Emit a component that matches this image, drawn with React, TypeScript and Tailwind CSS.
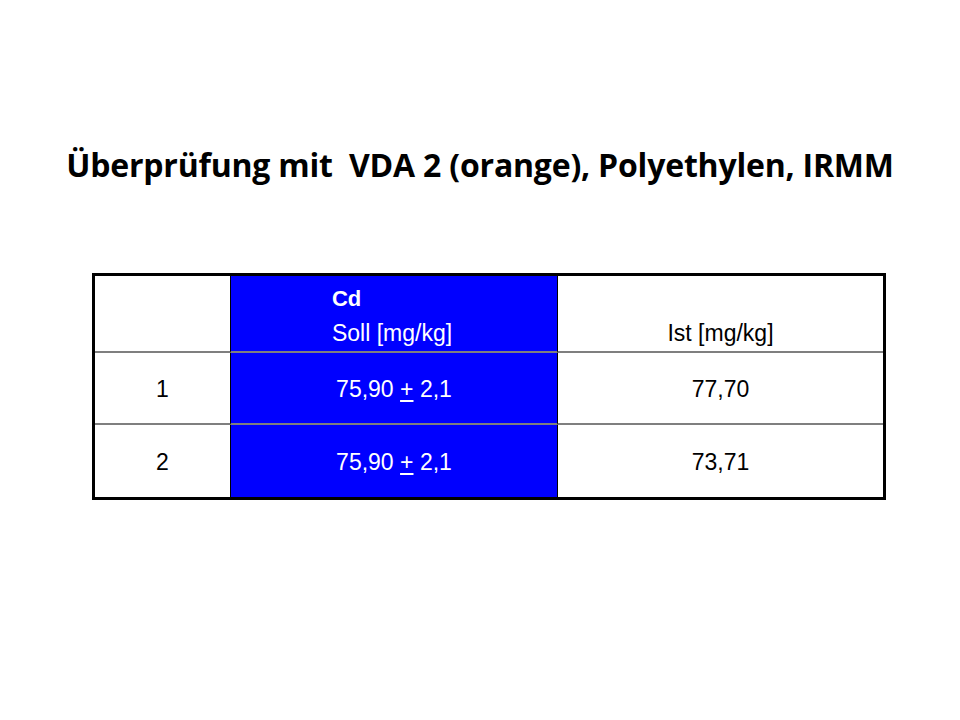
import React from 'react';

// Slide: Überprüfung VDA 2 – Cd Soll/Ist comparison table

const rows = [
  { nr: '1', ist: '77,70' },
  { nr: '2', ist: '73,71' },
];

function Soll() {
  return (
    <span>
      75,90 <span className="underline underline-offset-[3px]">+</span> 2,1
    </span>
  );
}

export default function App() {
  return (
    <div className="w-[960px] h-[720px] bg-white flex flex-col items-center">
      <h1
        className="mt-[140px] text-[32px] leading-[50px] font-bold text-black whitespace-pre tracking-[-0.2px]"
        style={{ fontFamily: '"Open Sans", "Noto Sans", sans-serif' }}
      >
        Überprüfung mit  VDA 2 (orange), Polyethylen, IRMM
      </h1>

      <div
        className="mt-[83px] ml-[18px] w-[794px] border-[3px] border-black grid grid-cols-[135px_327px_1fr] text-[23px] text-black"
        style={{ fontFamily: '"Liberation Sans", Arial, sans-serif' }}
      >
        {/* header */}
        <div className="h-[77px] border-b-2 border-[#7f7f7f]" />
        <div className="h-[77px] bg-[#0000ff] border-l border-b-2 border-l-black border-b-[#7f7f7f] text-white flex justify-center">
          <div className="pt-[6px] leading-[34px] pr-1">
            <div className="font-bold text-[22px]">Cd</div>
            <div>Soll [mg/kg]</div>
          </div>
        </div>
        <div className="h-[77px] border-l border-b-2 border-l-black border-b-[#7f7f7f] flex items-end justify-center pb-[5px] leading-[26px]">
          Ist [mg/kg]
        </div>

        {rows.map((r, i) => (
          <React.Fragment key={r.nr}>
            <div className={`h-[72px] flex items-center justify-center pt-[2px] ${i === 0 ? 'border-b-2 border-[#7f7f7f]' : ''}`}>
              {r.nr}
            </div>
            <div className={`h-[72px] bg-[#0000ff] text-white border-l border-l-black flex items-center justify-center pt-[2px] ${i === 0 ? 'border-b-2 border-b-[#7f7f7f]' : ''}`}>
              <Soll />
            </div>
            <div className={`h-[72px] border-l border-l-black flex items-center justify-center pt-[2px] ${i === 0 ? 'border-b-2 border-b-[#7f7f7f]' : ''}`}>
              {r.ist}
            </div>
          </React.Fragment>
        ))}
      </div>
    </div>
  );
}
